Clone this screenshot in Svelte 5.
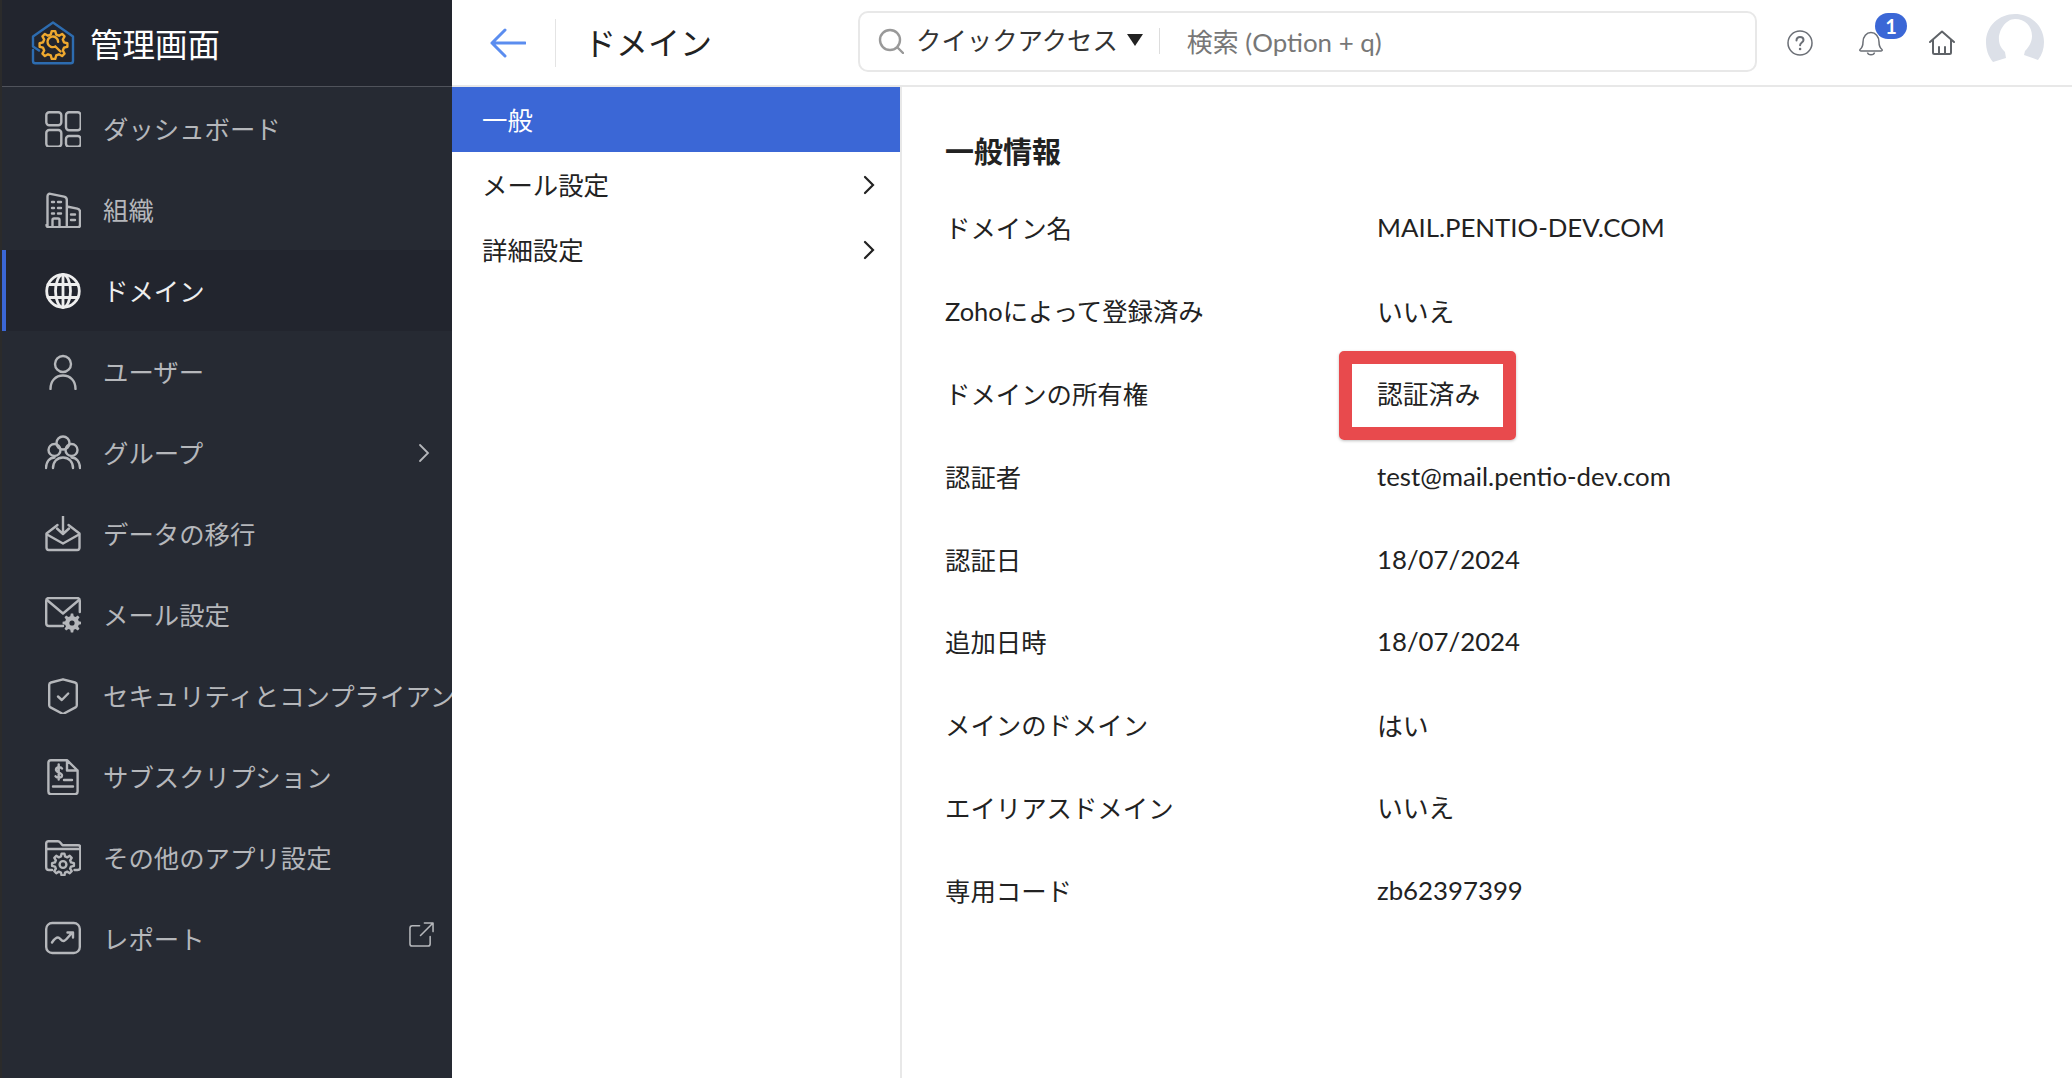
<script>
  // outline of a toothed gear, used by the logo and a couple of menu icons
  function gear(cx, cy, outer, inner, teeth) {
    const step = (Math.PI * 2) / teeth;
    let d = '';
    for (let i = 0; i < teeth; i++) {
      const a = i * step;
      const pts = [
        [inner, a - step * 0.32],
        [outer, a - step * 0.16],
        [outer, a + step * 0.16],
        [inner, a + step * 0.32]
      ];
      for (const [r, t] of pts) {
        d += (d ? 'L' : 'M') + (cx + r * Math.cos(t)).toFixed(2) + ' ' + (cy + r * Math.sin(t)).toFixed(2);
      }
    }
    return d + 'z';
  }

  const icons = {
    dashboard: '<rect x="1.3" y="1.3" width="15" height="13" rx="3"/><rect x="21" y="1.3" width="14.7" height="18" rx="3"/><rect x="1.3" y="19" width="15" height="16.700" rx="3"/><rect x="21" y="25" width="14.700" height="10.700" rx="3"/>',
    org: '<path d="M2.5 35V4.500c0-2 1-3 3-2.600L19 4.600c2 .4 2.800 1.300 2.800 3.200V35M21.800 14.500l10.500 2.200c2 .4 2.700 1.400 2.700 3V33c0 1.500-.7 2.200-2.200 2.200H3.800c-1.500 0-2.300-.7-2.300-2.200"/><path d="M7 10h2M13 10h3M7 16h2M13 16h3M7 21.500h2M13 21.500h3M26 22.500h4M26 28h4M7.500 35v-7c0-1 .5-1.500 1.500-1.500h4c1 0 1.500.5 1.500 1.500v7"/>',
    globe: '<g stroke-width="2.800"><circle cx="18" cy="18" r="16.300"/><ellipse cx="18" cy="18" rx="7.500" ry="16.300"/><path d="M18 1.500v33M3 11.500h30M3 24.500h30"/></g>',
    user: '<circle cx="18" cy="10" r="8"/><path d="M5.500 35c0-8 5-13.500 12.500-13.500S30.500 27 30.500 35"/>',
    group: '<circle cx="18" cy="8" r="6.500"/><circle cx="9.500" cy="15" r="6"/><circle cx="26.500" cy="15" r="6"/><path d="M1 33c0-6 3.500-10.500 8.500-10.500M35 33c0-6-3.500-10.500-8.500-10.500M8 33c0-6 4-10.500 10-10.500S28 27 28 33"/>',
    migrate: '<path d="M12.500 9 1.500 17.500v14c0 1.500.8 2.500 2.300 2.500h28.400c1.500 0 2.300-1 2.300-2.500v-14L23.500 9"/><path d="M2 18.500l16 9 16-9M18 0v17M12 12.500l6 5.500 6-5.500"/>',
    mail: '<path d="M18 29H4c-1.800 0-2.800-1-2.800-2.800V3.800C1.200 2 2.200 1 4 1h28c1.800 0 2.800 1 2.800 2.800V15"/><path d="M2 3l16 13.500L34 3"/><path d="' + gear(27, 26, 9.500, 7, 8) + '" fill="currentColor" stroke="none"/><circle cx="27" cy="26" r="2.600" fill="#262a33" stroke="none"/>',
    security: '<path d="M18 1.300 30 4.500c1.300.4 1.800 1 1.800 2.300v20.400c0 1-.4 1.600-1.300 2.200L18 36 5.500 29.400c-.9-.6-1.300-1.200-1.300-2.200V6.800c0-1.300.5-1.900 1.800-2.300z"/><path d="M13 18.500l3.800 3.500 6.400-6.500"/>',
    subscription: '<path d="M22 1.200H6c-1.600 0-2.600 1-2.600 2.600v28.700c0 1.600 1 2.600 2.600 2.600h24c1.600 0 2.600-1 2.600-2.600V11.500zM22 1.200v10.300h10.600M8 27.500h20M19 21h8"/><path d="M17 9.500c-.8-1.500-5.500-2-6 1-.5 3.200 6.200 2.800 6 6-.2 3-5.500 2.800-6.500 .8M13.700 5.500v15"/>',
    folder: '<path d="M7 30H4c-1.800 0-2.800-1-2.800-2.800V3.500C1.200 2 2 1.200 3.500 1.200h9.500c1 0 1.500.3 2 1l2.500 3h15.500c1.500 0 2.300.8 2.300 2.300v19.700c0 1.800-1 2.800-2.800 2.800h-3M1.500 9h33"/><path d="' + gear(18, 24.500, 11, 8.300, 8) + '" fill="#262a33"/><circle cx="18" cy="24.500" r="3.400"/>',
    report: '<rect x="1.200" y="2" width="33.600" height="30" rx="6"/><path d="M7 21.500c2-3 4-5 6-5s3 3.500 5.500 3.500 5-5 9-8.500M22.500 11.500h5.500v5"/>'
  };

  const logoGear = gear(22.5, 24, 14, 10.8, 8);

  const menu = [
    { label: 'ダッシュボード', icon: 'dashboard' },
    { label: '組織', icon: 'org' },
    { label: 'ドメイン', icon: 'globe', active: true },
    { label: 'ユーザー', icon: 'user' },
    { label: 'グループ', icon: 'group', more: true },
    { label: 'データの移行', icon: 'migrate' },
    { label: 'メール設定', icon: 'mail' },
    { label: 'セキュリティとコンプライアンス', icon: 'security' },
    { label: 'サブスクリプション', icon: 'subscription' },
    { label: 'その他のアプリ設定', icon: 'folder' },
    { label: 'レポート', icon: 'report', external: true }
  ];

  const subMenu = [
    { label: '一般', active: true },
    { label: 'メール設定', more: true },
    { label: '詳細設定', more: true }
  ];

  const info = [
    { name: 'ドメイン名', value: 'MAIL.PENTIO-DEV.COM' },
    { name: 'Zohoによって登録済み', value: 'いいえ' },
    { name: 'ドメインの所有権', value: '認証済み', marked: true },
    { name: '認証者', value: 'test@mail.pentio-dev.com' },
    { name: '認証日', value: '18/07/2024' },
    { name: '追加日時', value: '18/07/2024' },
    { name: 'メインのドメイン', value: 'はい' },
    { name: 'エイリアスドメイン', value: 'いいえ' },
    { name: '専用コード', value: 'zb62397399' }
  ];
</script>

<div class="page">
  <aside class="sidebar">
    <div class="brand">
      <svg class="logo" viewBox="0 0 44 44" width="44" height="44" fill="none">
        <path d="M8 29.500 2 25.500V15.500L22 1.500 42 15.500V40c0 1.500-.8 2.300-2.300 2.300H4.300C2.800 42.300 2 41.500 2 40V29" stroke="#2d6cb0" stroke-width="2.400" stroke-linejoin="round" stroke-linecap="round" />
        <path d={logoGear} fill="#22252e" stroke="#efa92f" stroke-width="2.400" stroke-linejoin="round" />
        <path d="M29.500 30.500l-5.200-5a5.300 5.300 0 1 1 2.800-4.800" stroke="#efa92f" stroke-width="2.400" stroke-linecap="round" />
      </svg>
      <span class="brand-name">管理画面</span>
    </div>
    <nav class="menu">
      {#each menu as item}
        <div class="menu-item" class:active={item.active}>
          <svg class="menu-icon" viewBox="0 0 36 36" width="36" height="36" fill="none" stroke="currentColor" stroke-width="2.400" stroke-linecap="round" stroke-linejoin="round">
            {@html icons[item.icon]}
          </svg>
          <span class="menu-label">{item.label}</span>
          {#if item.more}
            <svg class="menu-more" viewBox="0 0 12 20" width="12" height="20" fill="none" stroke="currentColor" stroke-width="1.800" stroke-linecap="round"><path d="M2 2l8 8-8 8" /></svg>
          {/if}
          {#if item.external}
            <svg class="menu-external" viewBox="0 0 26 26" width="25" height="25" fill="none" stroke="currentColor" stroke-width="1.600" stroke-linecap="round" stroke-linejoin="round"><path d="M11 4H3.500C2 4 1 5 1 6.500v16C1 24 2 25 3.500 25h16c1.500 0 2.500-1 2.500-2.500V15M12 14L25 1M16 1h9v9" /></svg>
          {/if}
        </div>
      {/each}
    </nav>
  </aside>

  <div class="main">
    <header class="topbar">
      <svg class="back" viewBox="0 0 36 30" width="36" height="30" fill="none" stroke="#5b8def" stroke-width="3" stroke-linecap="round" stroke-linejoin="round"><path d="M35 15H2M15 2 2 15l13 13" /></svg>
      <span class="top-divider"></span>
      <h1 class="page-title">ドメイン</h1>
      <div class="search">
        <svg viewBox="0 0 26 26" width="26" height="26" fill="none" stroke="#999" stroke-width="2.400" stroke-linecap="round"><circle cx="12" cy="12" r="10" /><path d="M20 20l5 5" /></svg>
        <span class="quick">クイックアクセス</span>
        <span class="caret"></span>
        <span class="search-divider"></span>
        <span class="placeholder">検索 (Option + q)</span>
      </div>
      <div class="top-icons">
        <svg viewBox="0 0 26 26" width="26" height="26" fill="none" stroke="#6b6f76" stroke-width="1.500"><circle cx="13" cy="13" r="12" /><path d="M9.500 10.500c0-2.200 1.500-3.500 3.600-3.500 2 0 3.400 1.200 3.400 3 0 2.500-3.400 2.600-3.400 5.200" stroke-width="2" stroke-linecap="round" /><circle cx="13.100" cy="19" r="1.300" fill="#6b6f76" stroke="none" /></svg>
        <span class="bell">
          <svg viewBox="0 0 24 26" width="24" height="26" fill="none" stroke="#6b6f76" stroke-width="1.500" stroke-linejoin="round"><path d="M1 18.500c2.500-2 3-3.500 3-7.500 0-5.500 3.500-9.500 8-9.500s8 4 8 9.500c0 4 .5 5.500 3 7.500 .5 1-.2 1.500-1 1.500H2c-.8 0-1.500-.5-1-1.500zM8.500 21.500c.5 3 6.500 3 7 0" /></svg>
          <span class="badge">1</span>
        </span>
        <svg viewBox="0 0 26 26" width="26" height="26" fill="none" stroke="#5f6368" stroke-width="2" stroke-linecap="round" stroke-linejoin="round"><path d="M1 12 13 1.500 25 12M4 10v12.500c0 1 .5 1.500 1.500 1.500h15c1 0 1.500-.5 1.500-1.500V10M10 24v-7M16 24v-7" /></svg>
        <svg class="avatar" viewBox="0 0 58 50" width="58" height="50"><path d="M7 48C2 42 0 35 0 28 0 12 13 0 29 0s29 12 29 28c0 7-2 13-6 18l-14-5 1-4c4-4 7-9 7-15 0-10-7-17-17-17S12 18 13 26c0 5 3 9 6 12l1 6z" fill="#dce0e8" /></svg>
      </div>
    </header>

    <div class="body">
      <nav class="subnav">
        {#each subMenu as item}
          <div class="sub-item" class:active={item.active}>
            <span class="sub-label">{item.label}</span>
            {#if item.more}
              <svg viewBox="0 0 12 20" width="12" height="20" fill="none" stroke="#222" stroke-width="2.200" stroke-linecap="round"><path d="M2 2l8 8-8 8" /></svg>
            {/if}
          </div>
        {/each}
      </nav>
      <main class="content">
        <h2>一般情報</h2>
        <dl class="info">
          {#each info as row}
            <dt>{row.name}</dt>
            <dd class:marked={row.marked}>{row.value}</dd>
          {/each}
        </dl>
      </main>
    </div>
  </div>
</div>

<style>
  :global(body) {
    margin: 0;
    background: #fff;
  }

  .page {
    display: flex;
    width: 2072px;
    height: 1078px;
    overflow: hidden;
    font-family: Lato, "Noto Sans CJK JP", sans-serif;
    font-size: 25.4px;
    color: #222;
  }

  .sidebar {
    flex: none;
    width: 450px;
    background: #262a33;
    border-left: 2px solid #2b2b2b;
    overflow: hidden;
  }

  .brand {
    display: flex;
    align-items: center;
    gap: 15px;
    height: 86px;
    padding-left: 29px;
    background: #22252e;
    border-bottom: 1px solid #50535b;
  }

  .brand-name {
    padding-bottom: 2px;
    color: #fff;
    font-size: 32.500px;
  }

  .menu {
    padding-top: 1px;
  }

  .menu-item {
    display: flex;
    align-items: center;
    height: 81px;
    padding-left: 43px;
    color: #b5b7bb;
    white-space: nowrap;
    position: relative;
  }

  .menu-item.active {
    background: #22252e;
    color: #eeeeee;
    box-shadow: inset 4px 0 0 #3b67d6;
  }

  .menu-icon {
    flex: none;
  }

  .menu-label {
    margin-left: 22px;
    padding-bottom: 2px;
  }

  .menu-more {
    position: absolute;
    right: 22px;
    top: 31px;
  }

  .menu-external {
    position: absolute;
    right: 18px;
    top: 24px;
  }

  .main {
    flex: 1;
    min-width: 0;
    display: flex;
    flex-direction: column;
  }

  .topbar {
    flex: none;
    display: flex;
    align-items: center;
    height: 85px;
    border-bottom: 2px solid #e8e8e8;
  }

  .back {
    margin-left: 38px;
  }

  .top-divider {
    width: 1px;
    height: 48px;
    margin-left: 29px;
    background: #e4e4e4;
  }

  .page-title {
    margin: 0 0 0 28px;
    width: 274px;
    padding-bottom: 4px;
    font-size: 32px;
    font-weight: 400;
    color: #222;
  }

  .search {
    display: flex;
    align-items: center;
    box-sizing: border-box;
    width: 899px;
    height: 61px;
    margin-top: -3px;
    padding-left: 18px;
    border: 2px solid #e8e8e8;
    border-radius: 10px;
  }

  .quick {
    margin-left: 12px;
    padding-bottom: 5px;
    color: #333;
  }

  .caret {
    width: 0;
    height: 0;
    margin-left: 9px;
    margin-bottom: 3px;
    border-left: 8px solid transparent;
    border-right: 8px solid transparent;
    border-top: 12px solid #222;
  }

  .search-divider {
    width: 1px;
    height: 26px;
    margin-left: 16px;
    background: #dddddd;
  }

  .placeholder {
    margin-left: 27px;
    padding-bottom: 2px;
    font-size: 25.900px;
    color: #777;
  }

  .top-icons {
    display: flex;
    align-items: center;
    margin-left: 30px;
    gap: 46px;
  }

  .bell {
    position: relative;
    display: flex;
    margin-top: 2px;
  }

  .badge {
    position: absolute;
    left: 16px;
    top: -18px;
    width: 32px;
    height: 26px;
    border-radius: 13px;
    background: #3b67d6;
    color: #fff;
    font-size: 20px;
    font-weight: 700;
    line-height: 26px;
    text-align: center;
  }

  .avatar {
    margin-left: -15px;
    margin-top: -8px;
  }

  .body {
    flex: 1;
    min-height: 0;
    display: flex;
  }

  .subnav {
    flex: none;
    width: 448px;
    border-right: 2px solid #e8e8e8;
  }

  .sub-item {
    display: flex;
    align-items: center;
    justify-content: space-between;
    height: 65px;
    padding: 0 25px 0 30px;
  }

  .sub-label {
    padding-bottom: 2px;
  }

  .sub-item.active {
    background: #3b67d6;
    color: #fff;
  }

  .content {
    flex: 1;
    padding: 45px 0 0 43px;
  }

  h2 {
    margin: 0;
    height: 54px;
    font-size: 29px;
    line-height: 40px;
    font-weight: 700;
    color: #222;
  }

  .info {
    display: grid;
    grid-template-columns: 432px 1fr;
    grid-auto-rows: 82.800px;
    align-items: center;
    margin: 0;
  }

  dt {
    color: #222;
  }

  dd {
    margin: 0;
    position: relative;
    font-size: 25.800px;
  }

  /* red annotation drawn over the screenshot */
  .marked::after {
    content: "";
    position: absolute;
    left: -38px;
    top: -23px;
    width: 177px;
    height: 89px;
    box-sizing: border-box;
    border: 13px solid #e84a4d;
    border-radius: 5px;
    box-shadow: 0 1px 3px rgba(0, 0, 0, 0.25);
  }
</style>
